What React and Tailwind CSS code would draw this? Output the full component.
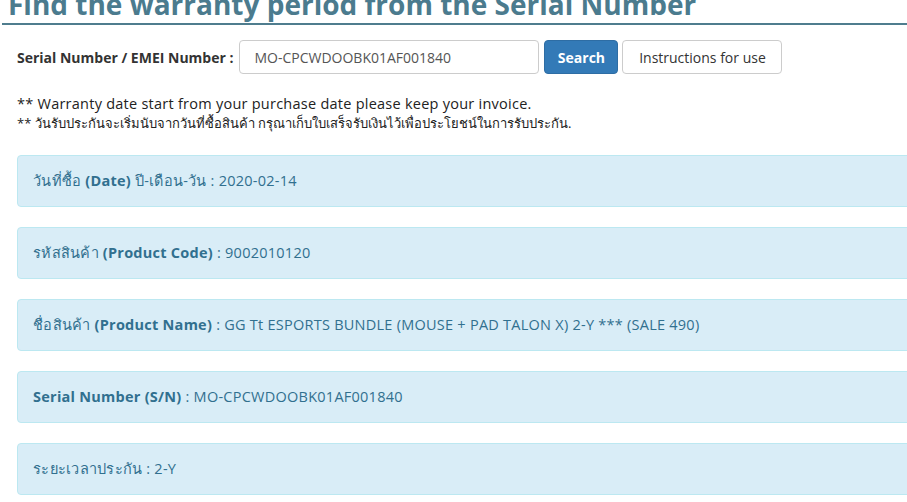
export default function App() {
  const rows = [
    { label: "วันที่ซื้อ", bold: "(Date)", rest: " ปี-เดือน-วัน : 2020-02-14" },
    { label: "รหัสสินค้า", bold: "(Product Code)", rest: " : 9002010120" },
    { label: "ชื่อสินค้า", bold: "(Product Name)", rest: " : GG Tt ESPORTS BUNDLE (MOUSE + PAD TALON X) 2-Y *** (SALE 490)" },
    { label: "", bold: "Serial Number (S/N)", rest: " : MO-CPCWDOOBK01AF001840" },
    { label: "ระยะเวลาประกัน", bold: "", rest: " : 2-Y" },
  ];
  return (
    <div className="w-[907px] h-[502px] overflow-hidden bg-white text-[#333] font-['Open_Sans','Noto_Sans',sans-serif]">
      <div className="w-[1000px]">
        <div className="ml-[2px] mt-[-13px] border-b-2 border-[#4f7d8e] pb-[2px] pl-[6px]">
          <h1 className="text-[28px] leading-[34px] font-bold text-[#4b7b8e]">
            Find the warranty period from the Serial Number
          </h1>
        </div>
        <div className="pl-[17px] pt-[15px] flex items-center">
          <span className="text-[14px] font-bold text-[#333] mr-[6px]">Serial Number / EMEI Number :</span>
          <div className="w-[300px] h-[34px] border border-[#ccc] rounded-[4px] px-[14px] flex items-center text-[14px] text-[#555]">
            MO-CPCWDOOBK01AF001840
          </div>
          <button className="ml-[5px] w-[74px] h-[34px] bg-[#337ab7] border border-[#2e6da4] rounded-[4px] text-white text-[14px] font-bold">
            Search
          </button>
          <button className="ml-[4px] w-[160px] h-[34px] bg-white border border-[#ccc] rounded-[4px] text-[#333] text-[14px]">
            Instructions for use
          </button>
        </div>
        <div className="pl-[17px] pt-[20px]">
          <p className="text-[14.5px] leading-[20px] tracking-[0.25px] text-[#222]">** Warranty date start from your purchase date please keep your invoice.</p>
          <p className="text-[13px] leading-[18px] text-[#222]">** วันรับประกันจะเริ่มนับจากวันที่ซื้อสินค้า กรุณาเก็บใบเสร็จรับเงินไว้เพื่อประโยชน์ในการรับประกัน.</p>
        </div>
        <div className="pl-[17px] pt-[23px] flex flex-col gap-[20px]">
          {rows.map((r, i) => (
            <div key={i} className="h-[52px] bg-[#d9edf7] border border-[#bce8f1] rounded-[4px] px-[15px] flex items-center text-[14.5px] tracking-[0.25px] text-[#31708f]">
              <span>
                {r.label}
                {r.label && r.bold ? " " : ""}
                {r.bold && <b className="font-bold">{r.bold}</b>}
                {r.rest}
              </span>
            </div>
          ))}
        </div>
      </div>
    </div>
  );
}
